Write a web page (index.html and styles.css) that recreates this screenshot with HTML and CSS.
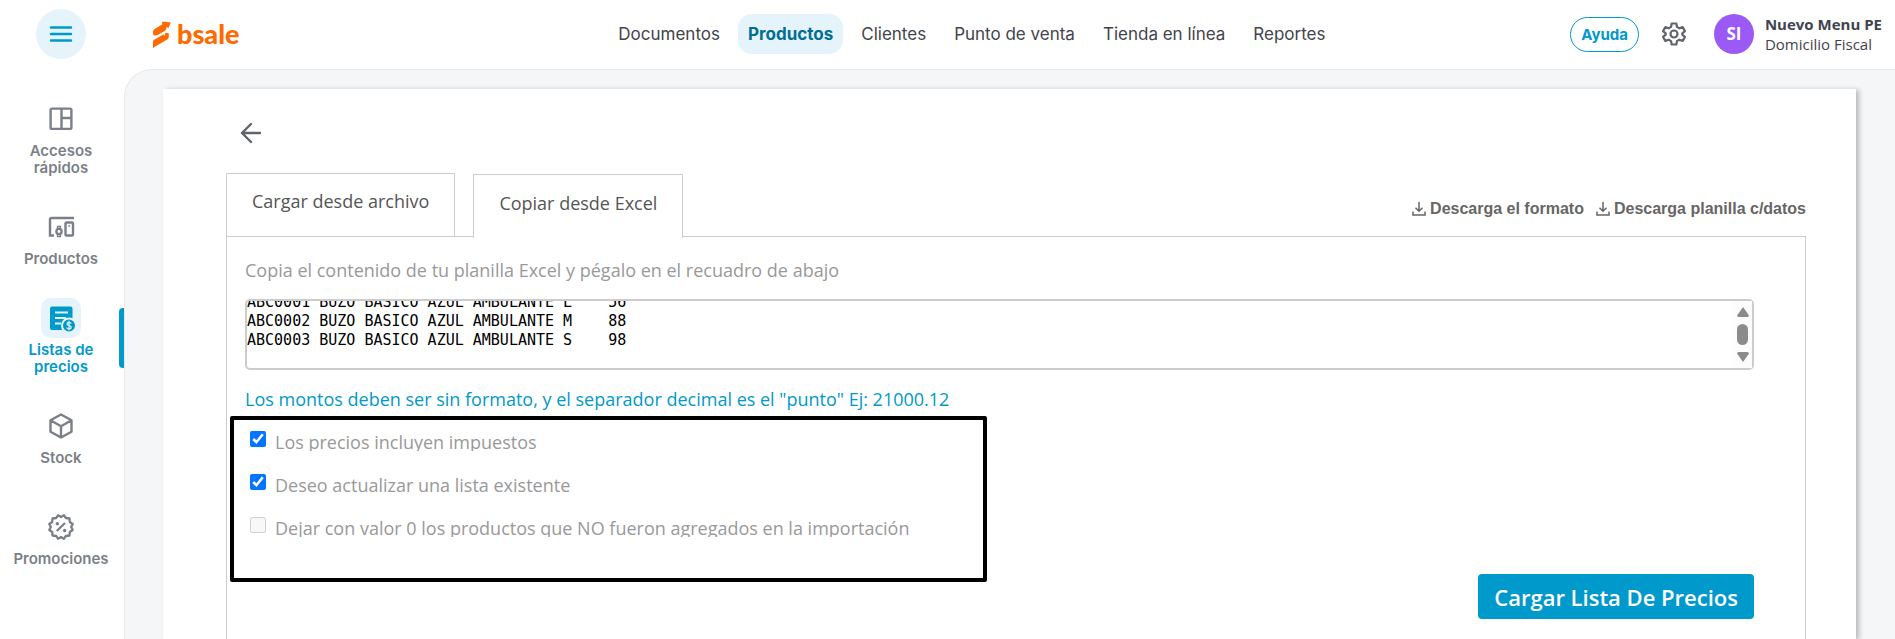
FILE: index.html
```html
<!DOCTYPE html>
<html lang="es">
<head>
    <meta charset="UTF-8">
    <meta name="viewport" content="width=device-width, initial-scale=1.0">
    <title>Listas de precios</title>
    <link rel="stylesheet" href="styles.css">
</head>
<body>
    <header class="topbar">
        <div class="brand">
            <button class="menu-button" type="button" aria-label="Menú">
                <svg width="24" height="18" viewBox="0 0 24 18" stroke="currentColor" stroke-width="2.4" stroke-linecap="round">
                    <path d="M2 2.5h20M2 9h20M2 15.5h20"/>
                </svg>
            </button>
            <a class="logo" href="#">
                <svg width="18" height="27" viewBox="0 0 18 27" fill="currentColor">
                    <path d="M0 13.5V10.8Q0 9 1.6 8L9.5 3.2 8.6 1Q12 .6 17.8 1.4L15.2 7.4 14 5.6 13 8.6Q12.600 9.500 11.600 10L5.600 13.500Q3 15 1.300 14.400Z"/>
                    <path d="M15.800 12.500V15.800Q15.800 17.600 14.300 18.500L3.500 24.800Q1.500 25.800 0 27.200V20.600Q0 19.400 1.200 18.700L10.300 13.500 11.400 14.800 12.600 11.700Q14.600 11.400 15.800 12.500Z"/>
                </svg>
                <span>bsale</span>
            </a>
        </div>

        <nav class="main-nav">
            <a href="#">Documentos</a>
            <a href="#" class="active">Productos</a>
            <a href="#">Clientes</a>
            <a href="#">Punto de venta</a>
            <a href="#">Tienda en línea</a>
            <a href="#">Reportes</a>
        </nav>

        <div class="actions">
            <button class="help-button" type="button">Ayuda</button>
            <button class="icon-button" type="button" aria-label="Configuración">
                <svg width="28" height="28" viewBox="0 0 24 24" fill="none" stroke="currentColor" stroke-width="1.9" stroke-linejoin="round">
                    <path d="M10 3h4l.5 2.900 2.100 1.200 2.800-1 2 3.400-2.300 1.900v1.200l2.300 1.900-2 3.400-2.800-1-2.100 1.200L14 21h-4l-.5-2.900-2.100-1.200-2.800 1-2-3.400 2.300-1.900v-1.200L2.600 9.500l2-3.400 2.800 1 2.100-1.200z"/>
                    <circle cx="12" cy="12" r="3"/>
                </svg>
            </button>
            <div class="user">
                <span class="avatar">SI</span>
                <div class="user-text">
                    <strong>Nuevo Menu PE</strong>
                    <span>Domicilio Fiscal</span>
                </div>
            </div>
        </div>
    </header>

    <div class="layout">
        <aside class="sidebar">
            <a href="#" class="side-item">
                <span class="side-icon">
                    <svg width="28" height="28" viewBox="0 0 28 28" fill="none" stroke="currentColor" stroke-width="2.400">
                        <rect x="3.600" y="3.600" width="20.800" height="20.300" rx="1.500"/>
                        <path d="M14.500 3.600v20.300M14.500 13H24"/>
                    </svg>
                </span>
                <span>Accesos rápidos</span>
            </a>
            <a href="#" class="side-item">
                <span class="side-icon">
                    <svg width="28" height="28" viewBox="0 0 28 28" fill="none" stroke="currentColor" stroke-width="2.400">
                        <path d="M27 5H4.500Q3 5 3 6.500V22.500H7"/>
                        <rect x="18.500" y="9.500" width="7.500" height="13" rx="1"/>
                        <circle cx="12" cy="18.500" r="2.600"/>
                        <path d="M10.500 16v-2.500h3V16M10.500 21v2.500h3V21" stroke-width="1.300"/>
                        <circle cx="22.200" cy="13" r=".6" stroke-width="1"/>
                    </svg>
                </span>
                <span>Productos</span>
            </a>
            <a href="#" class="side-item active">
                <span class="side-icon">
                    <svg width="28" height="28" viewBox="0 0 28 28">
                        <path fill="currentColor" d="M5 2.500h18.500a2 2 0 0 1 2 2V24a2 2 0 0 1-2 2H5a2 2 0 0 1-2-2V4.500a2 2 0 0 1 2-2z"/>
                        <path d="M8 8.500h13M8 14h11M8 19.500h6" stroke="#e5f4fa" stroke-width="2.200"/>
                        <circle cx="22" cy="21.500" r="7" fill="currentColor" stroke="#e5f4fa" stroke-width="2"/>
                        <path d="M24.200 19.500q-.4-1.200-2.200-1.200-2 0-2 1.500t2 1.700q2.200.2 2.200 1.800t-2.200 1.600-2.300-1.400M22 16.800v9.400" stroke="#e5f4fa" stroke-width="1.200" fill="none"/>
                    </svg>
                </span>
                <span>Listas de precios</span>
            </a>
            <a href="#" class="side-item">
                <span class="side-icon">
                    <svg width="28" height="28" viewBox="0 0 28 28" fill="none" stroke="currentColor" stroke-width="2.400" stroke-linejoin="round">
                        <path d="M14 2.500 24.500 8.300V19.700L14 25.500 3.500 19.700V8.300zM3.500 8.300 14 14.200 24.500 8.300M14 14.200V25.500"/>
                    </svg>
                </span>
                <span>Stock</span>
            </a>
            <a href="#" class="side-item last">
                <span class="side-icon">
                    <svg width="28" height="28" viewBox="0 0 28 28" fill="none" stroke="currentColor" stroke-width="2.300" stroke-linejoin="round">
                        <path d="M14 4 17 2.300 18.900 5 22.500 5.500 22.800 9 25.700 11 24.200 14 25.700 17 22.800 19 22.500 22.500 18.900 23 17 25.700 14 24 11 25.700 9.100 23 5.500 22.500 5.200 19 2.300 17 3.800 14 2.300 11 5.200 9 5.500 5.500 9.100 5 11 2.300z"/>
                        <path d="M9.800 18 18 10"/>
                        <circle cx="10.300" cy="10.800" r="1" fill="currentColor" stroke-width="1.500"/>
                        <circle cx="17.700" cy="17.500" r="1" fill="currentColor" stroke-width="1.500"/>
                    </svg>
                </span>
                <span>Promociones</span>
            </a>
        </aside>

        <main class="content">
            <section class="card">
                <a href="#" class="back" aria-label="Volver">
                    <svg width="22" height="22" viewBox="0 0 22 22" fill="none" stroke="currentColor" stroke-width="2.400" stroke-linecap="round" stroke-linejoin="round">
                        <path d="M20 11H2M11 2 2 11l9 9"/>
                    </svg>
                </a>

                <div class="tabs-row">
                    <div class="tabs">
                        <button type="button" class="tab">Cargar desde archivo</button>
                        <button type="button" class="tab active">Copiar desde Excel</button>
                    </div>
                    <div class="downloads">
                        <a href="#">
                            <svg width="14" height="14" viewBox="0 0 14 14" fill="none" stroke="currentColor" stroke-width="1.500">
                                <path d="M7 0v9M3.500 5.800 7 9.200l3.500-3.400M1 9.500V13h12V9.500"/>
                            </svg>
                            Descarga el formato
                        </a>
                        <a href="#">
                            <svg width="14" height="14" viewBox="0 0 14 14" fill="none" stroke="currentColor" stroke-width="1.500">
                                <path d="M7 0v9M3.500 5.800 7 9.200l3.500-3.400M1 9.500V13h12V9.500"/>
                            </svg>
                            Descarga planilla c/datos
                        </a>
                    </div>
                </div>

                <form class="panel">
                    <label class="hint" for="datos">Copia el contenido de tu planilla Excel y pégalo en el recuadro de abajo</label>
                    <div class="paste-wrap">
                        <textarea id="datos" class="paste-box" spellcheck="false">ABC0001 BUZO BASICO AZUL AMBULANTE L    56
ABC0002 BUZO BASICO AZUL AMBULANTE M    88
ABC0003 BUZO BASICO AZUL AMBULANTE S    98

</textarea>
                        <div class="scrollbar" aria-hidden="true">
                            <svg width="12" height="10" viewBox="0 0 12 10"><path d="M6 0 12 8.500 11 10H1L0 8.500z"/></svg>
                            <span class="thumb"></span>
                            <svg width="12" height="10" viewBox="0 0 12 10"><path d="M6 10 12 1.500 11 0H1L0 1.500z"/></svg>
                        </div>
                    </div>
                    <p class="note">Los montos deben ser sin formato, y el separador decimal es el "punto" Ej: 21000.12</p>

                    <div class="options">
                        <div class="option">
                            <input type="checkbox" id="impuestos" checked>
                            <label for="impuestos">Los precios incluyen impuestos</label>
                        </div>
                        <div class="option">
                            <input type="checkbox" id="actualizar" checked>
                            <label for="actualizar">Deseo actualizar una lista existente</label>
                        </div>
                        <div class="option">
                            <input type="checkbox" id="valor-cero" disabled>
                            <label for="valor-cero">Dejar con valor 0 los productos que NO fueron agregados en la importación</label>
                        </div>
                    </div>

                    <button type="button" class="submit">Cargar Lista De Precios</button>
                </form>
            </section>
        </main>
    </div>

    <script>
        document.querySelector('.paste-box').scrollTop = 8;
    </script>
</body>
</html>
```
FILE: styles.css
```css
:root {
    --blue: #0099cc;
    --blue-light: #e5f4fa;
    --grey-text: #999;
    --grey-icon: #7b7f87;
    --line: #ccc;
    --dark: #3f444d;
}

* {
    margin: 0;
    padding: 0;
    box-sizing: border-box;
}

body {
    min-height: 100vh;
    display: flex;
    flex-direction: column;
    font-family: 'Open Sans', sans-serif;
    background: #fff;
    overflow: hidden;
}

a {
    color: inherit;
    text-decoration: none;
}

button {
    font-family: inherit;
    background: none;
    border: none;
    cursor: pointer;
}

svg {
    display: block;
    flex: none;
}

/* Barra superior */
.topbar {
    height: 69px;
    padding: 0 13px 1px 36px;
    display: grid;
    grid-template-columns: auto 11fr auto 7fr auto;
    align-items: center;
}

.brand {
    display: flex;
    align-items: center;
    gap: 67px;
}

.menu-button {
    width: 50px;
    height: 50px;
    border-radius: 50%;
    background: var(--blue-light);
    color: var(--blue);
    display: flex;
    align-items: center;
    justify-content: center;
}

.logo {
    display: flex;
    align-items: center;
    gap: 6px;
    color: #ff6a00;
    font-family: Lato, sans-serif;
    font-size: 27px;
    font-weight: 900;
    line-height: 28px;
}

.main-nav {
    grid-column: 3;
    display: flex;
    gap: 8px;
    font-family: Inter, sans-serif;
    font-size: 17px;
    color: var(--dark);
}

.main-nav a {
    padding: 0 10px;
    line-height: 40px;
    border-radius: 14px;
    white-space: nowrap;
}

.main-nav .active {
    background: var(--blue-light);
    color: #006e93;
    font-weight: 700;
}

.actions {
    grid-column: 5;
    display: flex;
    align-items: center;
}

.help-button {
    height: 35px;
    padding: 0 10px;
    border: 1px solid var(--blue);
    border-radius: 18px;
    color: var(--blue);
    font-family: Inter, sans-serif;
    font-size: 15px;
    font-weight: 700;
}

.icon-button {
    margin: 0 26px 0 21px;
    color: #60646c;
}

.user {
    display: flex;
    align-items: center;
    gap: 11px;
}

.avatar {
    width: 40px;
    height: 40px;
    border-radius: 50%;
    background: #9b59f6;
    color: #fff;
    font-size: 17px;
    font-weight: 700;
    line-height: 40px;
    text-align: center;
}

.user-text {
    display: flex;
    flex-direction: column;
    font-size: 15px;
    line-height: 20px;
    color: var(--dark);
    white-space: nowrap;
}

/* Menú lateral */
.layout {
    flex: 1;
    display: flex;
}

.sidebar {
    width: 124px;
    padding-top: 30px;
    display: flex;
    flex-direction: column;
    gap: 31px;
    flex: none;
}

.side-item {
    position: relative;
    display: flex;
    flex-direction: column;
    align-items: center;
    gap: 3px;
    padding: 0 20px 0 18px;
    font-family: Inter, sans-serif;
    font-size: 15px;
    font-weight: 600;
    line-height: 17px;
    text-align: center;
    color: var(--grey-icon);
}

.side-item.last {
    margin-top: 10px;
}

.side-icon {
    width: 40px;
    height: 40px;
    border-radius: 10px;
    display: flex;
    align-items: center;
    justify-content: center;
}

.side-item.active {
    color: var(--blue);
}

.side-item.active .side-icon {
    background: var(--blue-light);
}

.side-item.active::after {
    content: '';
    position: absolute;
    top: 10px;
    right: 0;
    width: 5px;
    height: 60px;
    border-radius: 4px 0 0 4px;
    background: var(--blue);
}

/* Contenido */
.content {
    flex: 1;
    display: flex;
    padding: 19px 39px 0 38px;
    background: #f5f6f8;
    border: solid #e6e8ea;
    border-width: 1px 0 0 1px;
    border-top-left-radius: 28px;
}

.card {
    flex: 1;
    display: flex;
    flex-direction: column;
    padding: 33px 50px 0 63px;
    background: #fff;
    box-shadow: 3px 1px 5px rgba(0, 0, 0, 0.25);
}

.back {
    align-self: flex-start;
    margin-left: 14px;
    color: #60646c;
}

.tabs-row {
    display: flex;
    align-items: flex-end;
    justify-content: space-between;
    margin-top: 29px;
}

.tabs {
    display: flex;
    align-items: flex-end;
    gap: 18px;
}

.tab {
    height: 63px;
    padding: 0 25px 8px;
    border: 1px solid var(--line);
    border-bottom: none;
    background: #fff;
    font-size: 18px;
    font-weight: 500;
    color: #555;
}

/* tapa el borde superior del panel */
.tab.active {
    position: relative;
    margin-bottom: -2px;
    height: 64px;
}

.downloads {
    display: flex;
    gap: 12px;
    padding-bottom: 17px;
    font-family: 'Liberation Sans', sans-serif;
    font-size: 16px;
    font-weight: 700;
    line-height: 20px;
    color: #666;
}

.downloads a {
    display: flex;
    align-items: center;
    gap: 4px;
}

.panel {
    flex: 1;
    display: flex;
    flex-direction: column;
    padding: 21px 51px 20px 18px;
    border: 1px solid var(--line);
    border-bottom: none;
    font-size: 18px;
    font-weight: 500;
    line-height: 24px;
}

.hint {
    color: var(--grey-text);
}

.paste-wrap {
    position: relative;
    margin: 17px 0;
}

.paste-box {
    display: block;
    width: 100%;
    height: 71px;
    border: 2px solid var(--line);
    border-radius: 5px;
    resize: none;
    overflow: hidden;
    font-family: 'DejaVu Sans Mono', monospace;
    font-size: 15px;
    line-height: 19px;
    color: #000;
}

.scrollbar {
    position: absolute;
    top: 2px;
    right: 2px;
    bottom: 2px;
    width: 19px;
    padding: 6px 0;
    display: flex;
    flex-direction: column;
    align-items: center;
    justify-content: space-between;
    background: #fcfcfc;
    fill: #8b8b8b;
}

.thumb {
    width: 11px;
    height: 21px;
    border-radius: 6px;
    background: #8b8b8b;
}

.note {
    color: var(--blue);
}

.options {
    width: 757px;
    height: 166px;
    margin: 5px 0 0 -15px;
    padding: 11px 16px;
    border: 4px solid #000;
    border-radius: 2px;
    display: flex;
    flex-direction: column;
    gap: 23px;
}

.option {
    height: 20px;
    display: flex;
    align-items: flex-start;
    gap: 9px;
    line-height: 22px;
    color: var(--grey-text);
    overflow: hidden;
}

.option input {
    width: 16px;
    height: 16px;
    flex: none;
    accent-color: #0075ff;
}

.submit {
    align-self: flex-end;
    height: 45px;
    margin-top: -8px;
    padding: 0 16px;
    border-radius: 4px;
    background: var(--blue);
    color: #fff;
    font-size: 22px;
    font-weight: 600;
}
```
